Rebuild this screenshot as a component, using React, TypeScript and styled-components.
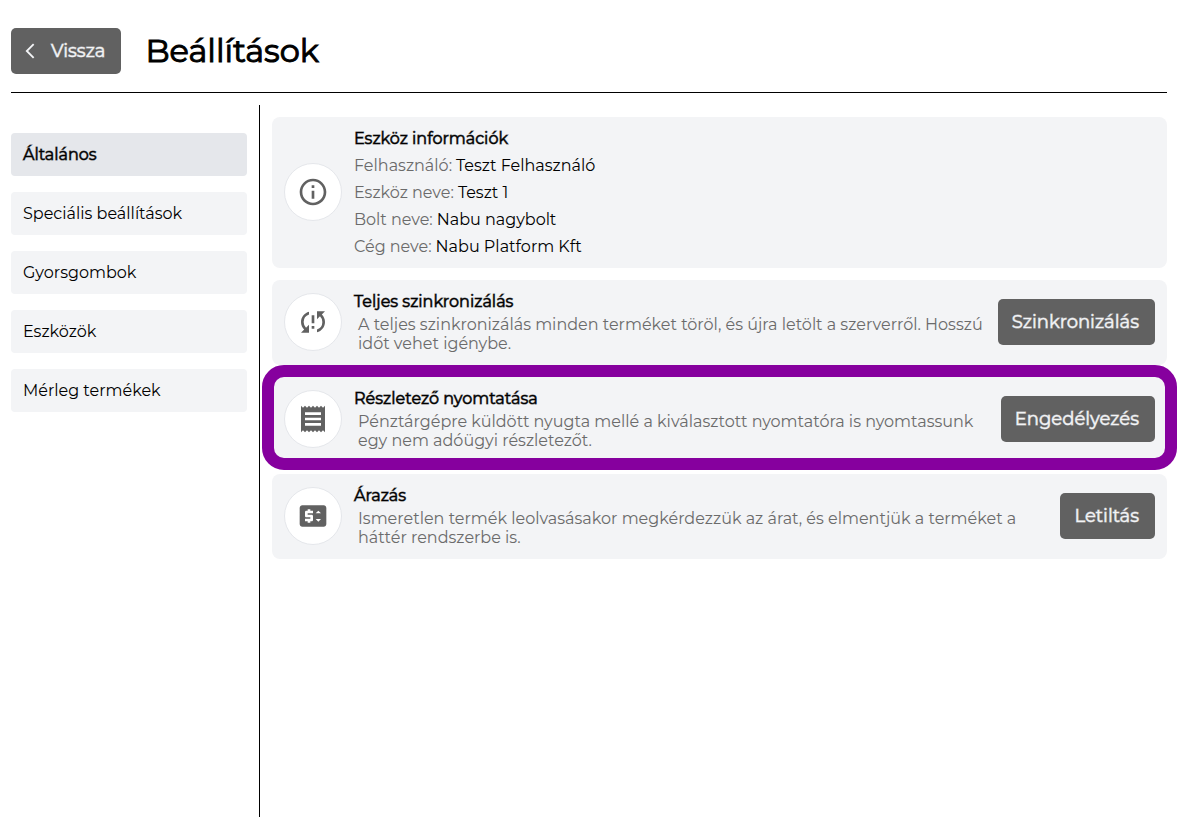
import type { ReactNode } from 'react';
import styled, { createGlobalStyle, css } from 'styled-components';
import {
  MdArrowBackIosNew,
  MdInfoOutline,
  MdPriceChange,
  MdReceipt,
  MdSyncProblem,
} from 'react-icons/md';

const GlobalStyle = createGlobalStyle`
  *, *::before, *::after { box-sizing: border-box; }
  body {
    margin: 0;
    background: #fff;
    color: #000;
    font-family: Montserrat, Inter, "Noto Sans", sans-serif;
    font-size: 16px;
    line-height: 19px;
  }
  h1, h2, p, ul, dl, dd { margin: 0; padding: 0; }
  button { font-family: inherit; }
`;

/* Emphasis keeps the regular letter widths and only thickens the strokes. */
const emphasis = css`
  font-weight: 400;
  -webkit-text-stroke: 1px color-mix(in srgb, currentColor 60%, transparent);
`;

const Page = styled.div`
  display: flex;
  flex-direction: column;
  min-height: 100vh;
  padding: 28px 10px 0 11px;
`;

const Header = styled.header`
  display: flex;
  align-items: center;
  gap: 24px;
  padding-bottom: 18px;
  border-bottom: 1px solid #000;
`;

const Title = styled.h1`
  font-size: 32px;
  line-height: 40px;
  font-weight: 400;
  -webkit-text-stroke: 1px currentColor;
`;

const Button = styled.button<{ $withIcon?: boolean }>`
  display: flex;
  flex-shrink: 0;
  align-items: center;
  gap: 12px;
  height: 46px;
  padding: 0 16px 0 ${(p) => (p.$withIcon ? 10 : 14)}px;
  border: 0;
  border-radius: 5px;
  background: #616161;
  color: #f3f4f6;
  font-size: 18px;
  line-height: 22px;
  cursor: pointer;
  ${emphasis}
`;

const Body = styled.div`
  display: flex;
  flex: 1;
  margin-top: 12px;
`;

const Sidebar = styled.nav`
  flex: 0 0 249px;
  padding: 28px 12px 0 0;
  border-right: 1px solid #000;
`;

const Menu = styled.ul`
  display: flex;
  flex-direction: column;
  gap: 16px;
  list-style: none;
`;

const MenuLink = styled.a<{ $active?: boolean }>`
  display: block;
  padding: 12px;
  border-radius: 4px;
  background: ${(p) => (p.$active ? '#e5e7eb' : '#f3f4f6')};
  color: #000;
  text-decoration: none;
  ${(p) => p.$active && emphasis}
`;

const Main = styled.main`
  display: flex;
  flex: 1;
  flex-direction: column;
  gap: 12px;
  min-width: 0;
  padding: 12px 0 12px 12px;
`;

const Card = styled.section`
  position: relative;
  display: flex;
  align-items: center;
  gap: 12px;
  padding: 11px 12px 12px;
  border-radius: 8px;
  background: #f3f4f6;
`;

const Highlight = styled.div`
  position: absolute;
  inset: -12px -10px -8px;
  border: 12px solid #86009e;
  border-radius: 22px;
  pointer-events: none;
`;

const IconCircle = styled.div`
  display: flex;
  flex: 0 0 58px;
  align-items: center;
  justify-content: center;
  height: 58px;
  border: 1px solid #e5e7eb;
  border-radius: 50%;
  background: #fff;
  color: #616161;
`;

const CardText = styled.div<{ $gap: number }>`
  display: flex;
  flex: 1;
  flex-direction: column;
  gap: ${(p) => p.$gap}px;
  min-width: 0;
  padding-top: 1px;
`;

const CardTitle = styled.h2`
  font-size: 16px;
  line-height: 19px;
  ${emphasis}
`;

const Description = styled.p`
  padding-left: 4px;
  color: #6b6b6b;
`;

const Details = styled.dl`
  display: flex;
  flex-direction: column;
  gap: 8px;
`;

const Detail = styled.div`
  display: flex;
  gap: 4px;

  dt { color: #6b6b6b; }
`;

const menu = ['Általános', 'Speciális beállítások', 'Gyorsgombok', 'Eszközök', 'Mérleg termékek'];

const details = [
  ['Felhasználó:', 'Teszt Felhasználó'],
  ['Eszköz neve:', 'Teszt 1'],
  ['Bolt neve:', 'Nabu nagybolt'],
  ['Cég neve:', 'Nabu Platform Kft'],
];

interface SettingProps {
  icon: ReactNode;
  title: string;
  action: string;
  highlighted?: boolean;
  children: ReactNode;
}

function Setting({ icon, title, action, highlighted, children }: SettingProps) {
  return (
    <Card>
      <IconCircle>{icon}</IconCircle>
      <CardText $gap={4}>
        <CardTitle>{title}</CardTitle>
        <Description>{children}</Description>
      </CardText>
      <Button type="button">{action}</Button>
      {highlighted && <Highlight />}
    </Card>
  );
}

export default function App() {
  return (
    <Page>
      <GlobalStyle />
      <Header>
        <Button type="button" $withIcon>
          <MdArrowBackIosNew size={18} />
          Vissza
        </Button>
        <Title>Beállítások</Title>
      </Header>
      <Body>
        <Sidebar>
          <Menu>
            {menu.map((label, i) => (
              <li key={label}>
                <MenuLink href="#" $active={i === 0}>{label}</MenuLink>
              </li>
            ))}
          </Menu>
        </Sidebar>
        <Main>
          <Card>
            <IconCircle><MdInfoOutline size={32} /></IconCircle>
            <CardText $gap={8}>
              <CardTitle>Eszköz információk</CardTitle>
              <Details>
                {details.map(([name, value]) => (
                  <Detail key={name}>
                    <dt>{name}</dt>
                    <dd>{value}</dd>
                  </Detail>
                ))}
              </Details>
            </CardText>
          </Card>
          <Setting icon={<MdSyncProblem size={32} />} title="Teljes szinkronizálás" action="Szinkronizálás">
            A teljes szinkronizálás minden terméket töröl, és újra letölt a szerverről. Hosszú időt vehet igénybe.
          </Setting>
          <Setting icon={<MdReceipt size={32} />} title="Részletező nyomtatása" action="Engedélyezés" highlighted>
            Pénztárgépre küldött nyugta mellé a kiválasztott nyomtatóra is nyomtassunk egy nem adóügyi részletezőt.
          </Setting>
          <Setting icon={<MdPriceChange size={32} />} title="Árazás" action="Letiltás">
            Ismeretlen termék leolvasásakor megkérdezzük az árat, és elmentjük a terméket a háttér rendszerbe is.
          </Setting>
        </Main>
      </Body>
    </Page>
  );
}
